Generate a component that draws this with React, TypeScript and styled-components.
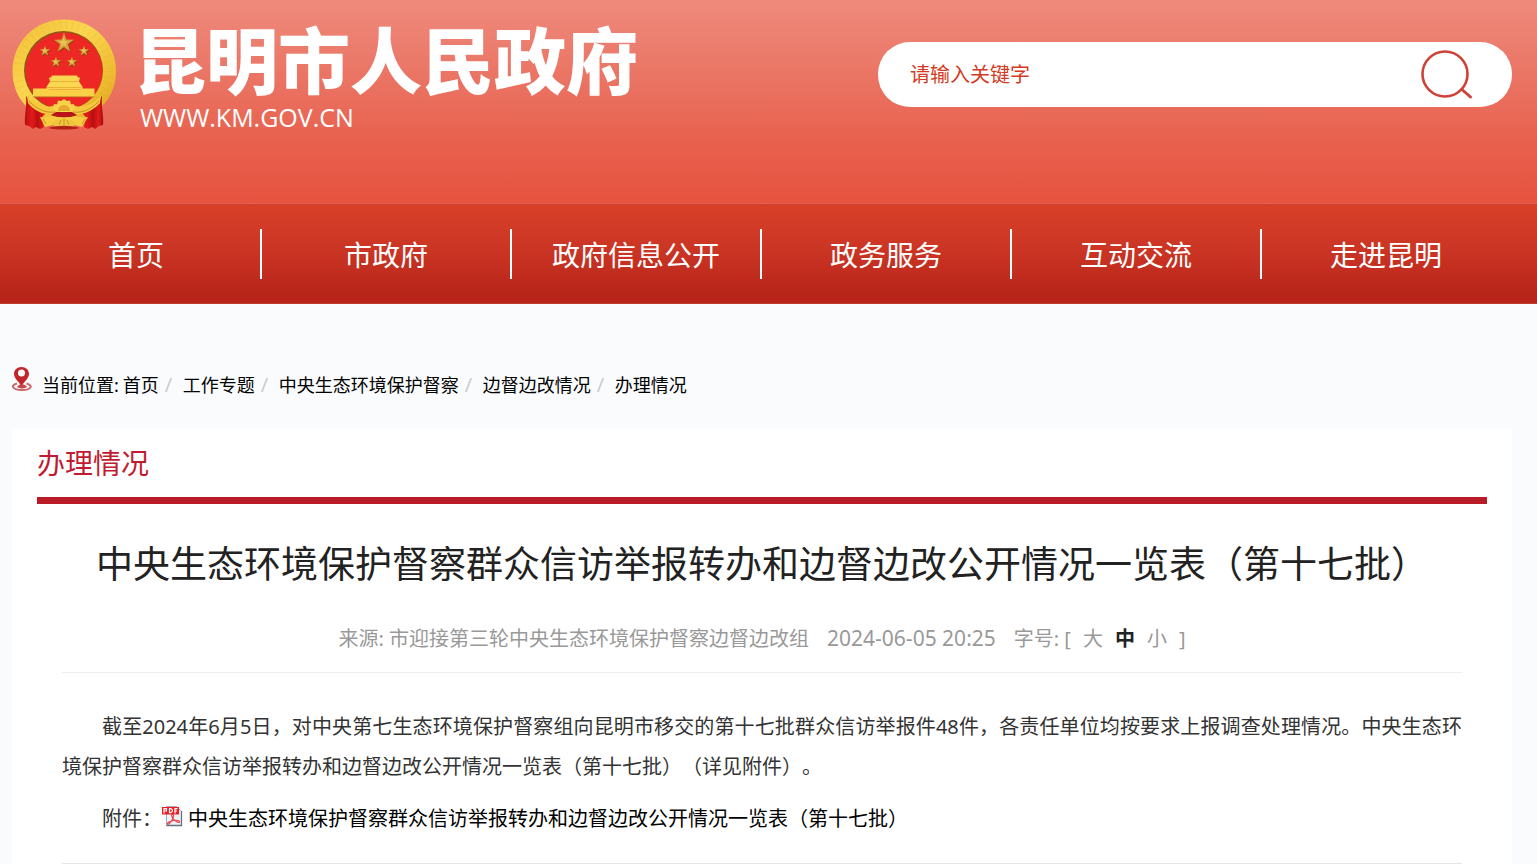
import React from "react";
import styled, { createGlobalStyle, css } from "styled-components";

const GlobalStyle = createGlobalStyle`
  *, *::before, *::after { box-sizing: border-box; }
  body {
    margin: 0;
    background: #fafbfd;
    color: #000;
    font-family: "Noto Sans", "Noto Sans CJK SC", sans-serif;
    font-size: 20px;
    text-spacing-trim: space-all;
  }
  a { color: inherit; text-decoration: none; }
  h1, h2, p, ol, ul { margin: 0; padding: 0; font-weight: 400; }
  ol, ul { list-style: none; }
`;

const gutter = css`
  padding-left: 12px;
  padding-right: 25px;
`;

const Header = styled.header`
  ${gutter}
  display: flex;
  justify-content: space-between;
  align-items: flex-start;
  height: 204px;
  background: linear-gradient(#ef8a7b 0, #ec7f70 40px, #e8604d 145px, #e6533f 100%);
  border-bottom: 1px solid #e8604c;
`;

const Brand = styled.a`
  display: flex;
  gap: 16px;
  padding-top: 19px;
  color: #fff;
`;

const BrandText = styled.span`
  display: flex;
  flex-direction: column;
`;

const BrandName = styled.span`
  font-size: 72px;
  line-height: 82px;
  font-weight: 900;
  white-space: nowrap;
`;

const BrandUrl = styled.span`
  padding-left: 6px;
  font-family: "Open Sans", "Noto Sans", sans-serif;
  font-size: 25px;
  line-height: 32px;
`;

const Search = styled.form`
  display: flex;
  align-items: center;
  width: 634px;
  height: 65px;
  margin-top: 42px;
  padding: 0 38px 0 32px;
  border-radius: 32px;
  background: #fff;
`;

const SearchInput = styled.input`
  flex: 1;
  min-width: 0;
  height: 100%;
  padding: 0;
  border: 0;
  outline: 0;
  background: transparent;
  color: #d23a22;
  font: inherit;
  &::placeholder { color: #d23a22; opacity: 1; }
`;

const SearchButton = styled.button`
  display: flex;
  padding: 0;
  border: 0;
  background: none;
  cursor: pointer;
`;

const NavBar = styled.nav`
  ${gutter}
  height: 100px;
  background: linear-gradient(#d84029, #cb3524 45%, #b62318 96%);
  border-top: 1px solid #cf402c;
  border-bottom: 1px solid #c23a30;
`;

const NavList = styled.ul`
  display: grid;
  grid-template-columns: repeat(6, 1fr);
  padding-top: 24px;
`;

const NavItem = styled.li`
  height: 50px;
  border-right: 2px solid #fff;
  color: #fff;
  font-size: 28px;
  line-height: 52px;
  text-align: center;
  &:last-child { border-color: transparent; }
`;

const Main = styled.main`
  ${gutter}
`;

const Crumbs = styled.nav`
  display: flex;
  height: 125px;
  padding-top: 62px;
  gap: 10px;
  font-size: 18px;
  line-height: 38px;
  white-space: nowrap;
`;

const CrumbList = styled.ol`
  display: flex;
`;

const CrumbLabel = styled.span`
  margin-right: 4px;
`;

const Crumb = styled.li`
  & + &::before {
    content: "/";
    display: inline-block;
    width: 24px;
    padding-left: 6px;
    color: #ccc;
    font-size: 20px;
    line-height: 20px;
  }
`;

const Panel = styled.article`
  padding: 0 25px;
  background: #fff;
`;

const SectionTitle = styled.h2`
  height: 75px;
  border-bottom: 7px solid #b91c26;
  color: #c01c31;
  font-size: 28px;
  line-height: 68px;
`;

const Article = styled.div`
  padding: 32px 25px 0;
`;

const Headline = styled.h1`
  color: #222;
  font-size: 37px;
  line-height: 56px;
  text-align: center;
`;

const Meta = styled.div`
  display: flex;
  justify-content: center;
  align-items: baseline;
  gap: 18px;
  margin-top: 30px;
  padding-bottom: 17px;
  border-bottom: 1px solid #eee;
  color: #999;
  line-height: 32px;
`;

const DateText = styled.time`
  font-size: 21px;
`;

const SizePicker = styled.span`
  display: flex;
  gap: 12px;
`;

const SizeButton = styled.button<{ $active?: boolean }>`
  padding: 0;
  border: 0;
  background: none;
  color: ${(p) => (p.$active ? "#222" : "inherit")};
  font: inherit;
  font-weight: ${(p) => (p.$active ? 700 : 400)};
  cursor: pointer;
`;

const Body = styled.div`
  padding: 34px 0 24px;
  border-bottom: 1px solid #e5e5e5;
  color: #333;
  line-height: 40px;
`;

const Paragraph = styled.p`
  text-align: justify;
  text-indent: 2em;
`;

const Attachment = styled.p`
  display: flex;
  align-items: center;
  margin-top: 12px;
  padding-left: 40px;
`;

const FileLink = styled.a`
  display: flex;
  align-items: center;
  gap: 5px;
  color: #000;
  svg { margin-bottom: 6px; }
`;

const starPoints = (cx: number, cy: number, r: number) =>
  Array.from({ length: 10 }, (_, i) => {
    const radius = i % 2 ? r * 0.4 : r;
    const a = (Math.PI / 5) * i - Math.PI / 2;
    return `${(cx + radius * Math.cos(a)).toFixed(2)},${(cy + radius * Math.sin(a)).toFixed(2)}`;
  }).join(" ");

const stars = [
  [52, 24, 10.5],
  [33, 32, 5.5],
  [72, 32, 5.5],
  [44, 43, 5.5],
  [60, 43, 5.5],
];

const Emblem = () => (
  <svg width="106" height="112" viewBox="0 0 106 112" role="img" aria-label="国徽">
    <defs>
      <linearGradient id="gold" x1="0" y1="0" x2="1" y2="1">
        <stop offset="0" stopColor="#f0bd35" />
        <stop offset="0.4" stopColor="#fbd650" />
        <stop offset="0.75" stopColor="#eebb30" />
        <stop offset="1" stopColor="#d99a20" />
      </linearGradient>
      <linearGradient id="drape" x1="0" y1="0" x2="1" y2="0">
        <stop offset="0" stopColor="#b30f10" />
        <stop offset="0.3" stopColor="#e41a1b" />
        <stop offset="0.55" stopColor="#b80f10" />
        <stop offset="0.8" stopColor="#e01b1a" />
        <stop offset="1" stopColor="#a50d0e" />
      </linearGradient>
    </defs>
    <path d="M52 .5C81 .5 104 23 104 52c0 21-11 36-26 44l-26 9-26-9C11 88 .5 73 .5 52 .5 23 23 .5 52 .5z" fill="url(#gold)" />
    <circle cx="52" cy="52" r="45.500" fill="none" stroke="#c98e1b" strokeWidth="9" strokeDasharray="1 5" opacity="0.12" />
    <circle cx="51.500" cy="51.500" r="39.500" fill="#8e5915" />
    <circle cx="52" cy="52" r="38.500" fill="#ed2824" />
    {stars.map(([x, y, r]) => (
      <g key={`${x}-${y}`}>
        <polygon points={starPoints(x + 0.6, y + 0.8, r)} fill="#7d3c10" />
        <polygon points={starPoints(x, y, r)} fill="#d6a13a" />
        <polygon points={starPoints(x - 0.4, y - 0.4, r * 0.5)} fill="#e9c45b" />
      </g>
    ))}
    <path d="M37 58.500h2l1-2h25l1 2h2l-1 4 4 6h-1l1 2H34l1-2h-1l4-6z" fill="#fbd650" />
    <path d="M38 62.500h28M35 68.500h34" stroke="#e2a92b" strokeWidth="0.800" />
    <path d="M21 69.500h16v1h32v-1h13.500V78H21z" fill="#f9d046" />
    <path d="M21 77.800h61.500" stroke="#b8751a" strokeWidth="0.800" />
    <path d="M14 77c5 7 12 12 22 15l-6 6 2 10-4 2-4-2-3 2-4-3-4-1c-1-9 2-18 1-29z" fill="url(#drape)" />
    <path d="M90 77c-5 7-12 12-22 15l6 6-2 10 4 2 4-2 3 2 4-3 4-1c1-9-2-18-1-29z" fill="url(#drape)" />
    <path d="M15 77c9 9 19 13 28 9l9-2 9 2c9 4 19 0 28-9l-1 7c-9 10-19 12-27 11l-9-3-9 3c-9 1-19-1-27-11z" fill="#f5c83e" />
    <path d="M17 82c9 10 19 12 26 11M87 82c-9 10-19 12-26 11" fill="none" stroke="#bd801a" strokeWidth="0.800" />
    <path d="M41 90l1-5 3 .5 1-4 3 .5 3-2 3 2 3-.5 1 4 3-.5 1 5-5 3H46z" fill="#f9d24b" />
    <path d="M46 92c0-8 12-8 12 0z" fill="#e5aa2d" />
    <path d="M28 98c9 1 16-1 24-5 8 4 15 6 24 5l-6 10-11-3H45l-12 3z" fill="#f7cb40" />
    <path d="M39 96c5 3 21 3 26 0l-5-3H44z" fill="#b7151a" />
    <path d="M40 105c5-7 19-7 24 0l-4 4H44z" fill="#f0c53d" />
    <path d="M36 109c10-3 22-3 32 0-9 2-23 2-32 0z" fill="#b22018" />
    <path d="M47 106l2-5M52 106v-6M57 106l-2-5M34 105l-3-5M70 105l3-5" stroke="#bd861e" strokeWidth="0.800" />
  </svg>
);

const SearchIcon = () => (
  <svg width="54" height="50" viewBox="0 0 54 50" fill="none" stroke="#cf4238" strokeWidth="2.600" strokeLinecap="round">
    <circle cx="25" cy="24" r="22.500" />
    <path d="M42 39.500L50.500 47" strokeWidth="3" />
  </svg>
);

const PinIcon = () => (
  <svg width="20" height="26" viewBox="0 0 20 26" aria-hidden="true">
    <path d="M5 17.500C-2.500 19.500 1 24 10 24s12-4.500 4.500-6.500" fill="none" stroke="#c9696c" strokeWidth="2" />
    <path d="M5 20.500c1 2.500 9 2.500 10 0l-3-2H8z" fill="#c4484c" />
    <path fillRule="evenodd" d="M9.500 1C5 1 2 4 2 8c0 4 4 7 7.500 12C13 15 17 12 17 8c0-4-3-7-7.500-7zm0 2.600a3.500 3.500 0 1 1 0 7 3.500 3.500 0 0 1 0-7z" fill="#c0272d" />
  </svg>
);

const PdfIcon = () => (
  <svg width="21" height="21" viewBox="0 0 21 21" aria-hidden="true">
    <path d="M4.500.5h10l5 5v14h-15z" fill="#eef2f8" stroke="#a3acba" />
    <path d="M19.500 5v14.500h-15" fill="none" stroke="#667085" strokeWidth="1.300" />
    <path d="M10.500 8.500c2 0 1 3-.5 5.500s-3.500 5-4.500 4 3-3 6-3.500 6.500 0 6 1.500-4-.5-6-3-2.500-4.500-1-4.500z" fill="none" stroke="#e8444a" strokeWidth="1.200" />
    <path d="M0 1h17v7.500H0z" fill="#ed1c24" />
    <path d="M2 7.500V2.700h2.500v2.300H2M7.500 2.700v4h1.500l1.300-1.200v-1.600l-1.300-1.200zM13 7.500V2.700h2.500M13 5h2" fill="none" stroke="#fff" strokeWidth="1.200" />
  </svg>
);

const navItems = ["首页", "市政府", "政府信息公开", "政务服务", "互动交流", "走进昆明"];
const crumbs = ["首页", "工作专题", "中央生态环境保护督察", "边督边改情况", "办理情况"];

export default function App() {
  return (
    <>
      <GlobalStyle />
      <Header>
        <Brand href="#">
          <Emblem />
          <BrandText>
            <BrandName>昆明市人民政府</BrandName>
            <BrandUrl>WWW.KM.GOV.CN</BrandUrl>
          </BrandText>
        </Brand>
        <Search role="search" onSubmit={(e) => e.preventDefault()}>
          <SearchInput type="text" aria-label="搜索" placeholder="请输入关键字" />
          <SearchButton type="submit" aria-label="搜索">
            <SearchIcon />
          </SearchButton>
        </Search>
      </Header>
      <NavBar aria-label="主导航">
        <NavList>
          {navItems.map((name) => (
            <NavItem key={name}>
              <a href="#">{name}</a>
            </NavItem>
          ))}
        </NavList>
      </NavBar>
      <Main>
        <Crumbs aria-label="当前位置">
          <PinIcon />
          <CrumbList>
            <CrumbLabel as="li">当前位置:</CrumbLabel>
            {crumbs.map((name) => (
              <Crumb key={name}>
                <a href="#">{name}</a>
              </Crumb>
            ))}
          </CrumbList>
        </Crumbs>
        <Panel>
          <SectionTitle>办理情况</SectionTitle>
          <Article>
            <Headline>中央生态环境保护督察群众信访举报转办和边督边改公开情况一览表（第十七批）</Headline>
            <Meta>
              <span>来源: 市迎接第三轮中央生态环境保护督察边督边改组</span>
              <DateText dateTime="2024-06-05T20:25">2024-06-05 20:25</DateText>
              <SizePicker>
                <span>字号: [</span>
                <SizeButton type="button">大</SizeButton>
                <SizeButton type="button" $active>中</SizeButton>
                <SizeButton type="button">小</SizeButton>
                <span>]</span>
              </SizePicker>
            </Meta>
            <Body>
              <Paragraph>
                截至2024年6月5日，对中央第七生态环境保护督察组向昆明市移交的第十七批群众信访举报件48件，各责任单位均按要求上报调查处理情况。中央生态环境保护督察群众信访举报转办和边督边改公开情况一览表（第十七批）（详见附件）。
              </Paragraph>
              <Attachment>
                <span>附件：</span>
                <FileLink href="#">
                  <PdfIcon />
                  中央生态环境保护督察群众信访举报转办和边督边改公开情况一览表（第十七批）
                </FileLink>
              </Attachment>
            </Body>
          </Article>
        </Panel>
      </Main>
    </>
  );
}
